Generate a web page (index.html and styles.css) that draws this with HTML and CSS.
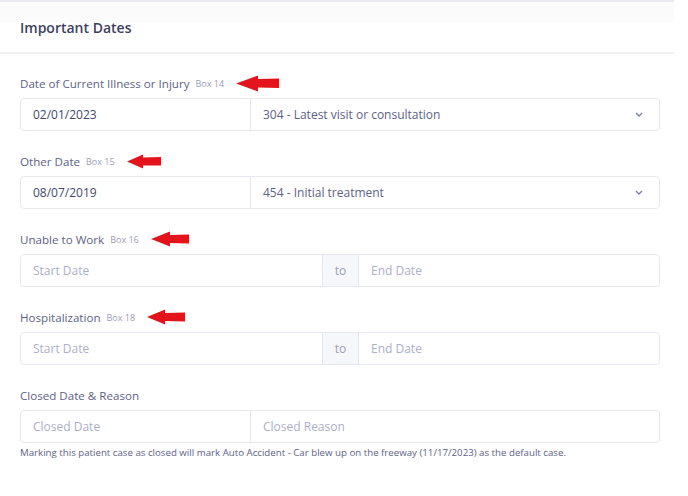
FILE: index.html
```html
<!DOCTYPE html>
<html lang="en">
<head>
  <meta charset="UTF-8" />
  <title>Important Dates</title>
  <link rel="stylesheet" href="styles.css">
</head>
<body>

  <div class="card">
    <div class="card-header">
      <h2>Important Dates</h2>
    </div>

    <div class="card-body">

      <div class="field">
        <label class="field-label">Date of Current Illness or Injury <span class="box">Box 14</span>
          <svg class="arrow" width="45" height="17" viewBox="0 0 45 17"><path d="M1 8.5 L23 0.5 L23 4 L44 3.5 L44 13 L23 12.5 L23 16.5 Z" fill="#e3141b"/></svg>
        </label>
        <div class="input-group">
          <div class="input w-date">02/01/2023</div>
          <div class="input select">304 - Latest visit or consultation
            <svg class="chev" width="8" height="5" viewBox="0 0 8 5"><path d="M1 1 L4 4 L7 1" fill="none" stroke="#7a80a8" stroke-width="1.4"/></svg>
          </div>
        </div>
      </div>

      <div class="field">
        <label class="field-label">Other Date <span class="box">Box 15</span>
          <svg class="arrow" width="36" height="15" viewBox="0 0 36 15"><path d="M1 7.5 L17 0.5 L17 3.5 L35 3 L35 11.5 L17 11.5 L17 14.5 Z" fill="#e3141b"/></svg>
        </label>
        <div class="input-group">
          <div class="input w-date">08/07/2019</div>
          <div class="input select">454 - Initial treatment
            <svg class="chev" width="8" height="5" viewBox="0 0 8 5"><path d="M1 1 L4 4 L7 1" fill="none" stroke="#7a80a8" stroke-width="1.4"/></svg>
          </div>
        </div>
      </div>

      <div class="field">
        <label class="field-label">Unable to Work <span class="box">Box 16</span>
          <svg class="arrow" width="40" height="16" viewBox="0 0 40 16"><path d="M1 8 L20 0.5 L20 4 L39 3.5 L39 12.5 L20 12 L20 15.5 Z" fill="#e3141b"/></svg>
        </label>
        <div class="input-group">
          <div class="input range placeholder">Start Date</div>
          <div class="addon">to</div>
          <div class="input placeholder">End Date</div>
        </div>
      </div>

      <div class="field">
        <label class="field-label">Hospitalization <span class="box">Box 18</span>
          <svg class="arrow" width="40" height="16" viewBox="0 0 40 16"><path d="M1 8 L19 0.5 L19 4 L39 3.5 L39 12.5 L19 12 L19 15.5 Z" fill="#e3141b"/></svg>
        </label>
        <div class="input-group">
          <div class="input range placeholder">Start Date</div>
          <div class="addon">to</div>
          <div class="input placeholder">End Date</div>
        </div>
      </div>

      <div class="field">
        <label class="field-label">Closed Date &amp; Reason</label>
        <div class="input-group">
          <div class="input w-date placeholder">Closed Date</div>
          <div class="input placeholder">Closed Reason</div>
        </div>
        <p class="help">Marking this patient case as closed will mark Auto Accident - Car blew up on the freeway (11/17/2023) as the default case.</p>
      </div>

    </div>
  </div>

</body>
</html>
```

FILE: styles.css
```css
body {
  margin: 0;
  font-family: "Open Sans", sans-serif;
  background: #fff;
  color: #5d6287;
}
.card {
  width: 674px;
  border-top: 2px solid #e9e9ef;
  background: #fff;
}
.card-header {
  height: 50px;
  padding: 0 20px;
  display: flex;
  align-items: center;
  border-bottom: 2px solid #f1f1f5;
  background: linear-gradient(#fbfbfc 0, #fbfbfc 20px, #fff 21px);
}
.card-header h2 {
  margin: 0;
  font-size: 14px;
  font-weight: 600;
  color: #3d4160;
}
.card-body {
  padding: 19px 14px 0 20px;
}
.field {
  margin-bottom: 20px;
}
.field-label {
  display: flex;
  align-items: center;
  height: 20px;
  margin-bottom: 5px;
  font-size: 11.6px;
  color: #5d6287;
}
.box {
  font-size: 9px;
  color: #9a9dbb;
  margin-left: 6px;
}
.arrow {
  margin-left: 11px;
}
.input-group {
  display: flex;
  height: 33px;
  border: 1px solid #e7e7f1;
  border-radius: 4px;
  box-sizing: border-box;
}
.input {
  flex: 1;
  display: flex;
  align-items: center;
  padding: 0 12px;
  font-size: 12px;
  color: #42476b;
  border-left: 1px solid #e7e7f1;
}
.input:first-child {
  border-left: none;
}
.input.w-date {
  flex: 0 0 229px;
  box-sizing: border-box;
}
.input.range {
  flex: 0 0 301px;
  box-sizing: border-box;
}
.select {
  justify-content: space-between;
  padding-right: 16px;
  color: #5d6287;
}
.placeholder {
  color: #abafca;
}
.addon {
  width: 35px;
  display: flex;
  align-items: center;
  justify-content: center;
  background: #f6f7fb;
  border-left: 1px solid #e7e7f1;
  font-size: 12px;
  color: #9a9dbb;
}
.help {
  margin: 3px 0 0;
  font-size: 9.7px;
  color: #5d6287;
}
```
